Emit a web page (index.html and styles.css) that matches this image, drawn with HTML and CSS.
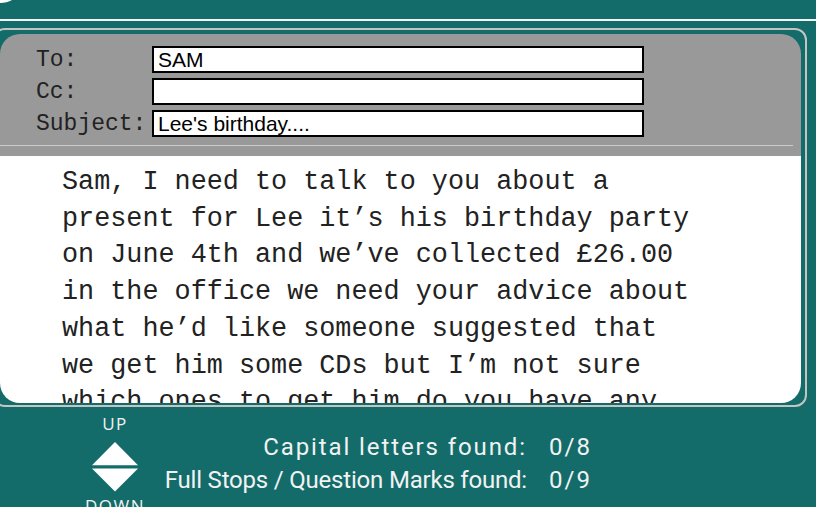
FILE: index.html
```html
<!DOCTYPE html>
<html lang="en">
  <head>
    <meta charset="utf-8" />
    <title>Punctuation Email</title>
    <link rel="stylesheet" href="styles.css">
  </head>
  <body>
    <div class="screen">
      <div class="corner-blob"></div>
      <header class="topbar"></header>

      <div class="frame">
        <div class="mail">
          <div class="mail-head">
            <div class="fields">
              <label class="field-label">To:</label>
              <div class="field-box">SAM</div>
              <label class="field-label">Cc:</label>
              <div class="field-box"></div>
              <label class="field-label">Subject:</label>
              <div class="field-box">Lee's birthday....</div>
            </div>
            <div class="divider"></div>
          </div>
          <div class="mail-body">
            <p class="message">
              Sam, I need to talk to you about a<br>
              present for Lee it’s his birthday party<br>
              on June 4th and we’ve collected £26.00<br>
              in the office we need your advice about<br>
              what he’d like someone suggested that<br>
              we get him some CDs but I’m not sure<br>
              which ones to get him do you have any<br>
              ideas
            </p>
          </div>
        </div>
      </div>

      <div class="controls">
        <div class="scroller">
          <span class="scroll-label">UP</span>
          <svg class="arrows" width="46" height="50" viewBox="0 0 46 50">
            <polygon points="23,0 46,23.3 0,23.3" fill="#fff" />
            <polygon points="0,26.6 46,26.6 23,49.6" fill="#fff" />
          </svg>
          <span class="scroll-label">DOWN</span>
        </div>
        <div class="stats">
          <div class="stat-row">
            <span class="stat-name spaced">Capital letters found:</span>
            <span class="stat-value">0/8</span>
          </div>
          <div class="stat-row">
            <span class="stat-name">Full Stops / Question Marks found:</span>
            <span class="stat-value">0/9</span>
          </div>
        </div>
      </div>
    </div>
  </body>
</html>
```

FILE: styles.css
```css
/* General Reset */
* {
  margin: 0;
  padding: 0;
  box-sizing: border-box;
}

html, body {
  height: 100%;
  background-color: #136c6a;
  overflow: hidden;
}

.screen {
  position: relative;
  width: 816px;
  height: 507px;
  overflow: hidden;
}

/* little white shape peeking in at the top left */
.corner-blob {
  position: absolute;
  left: -17px;
  top: -17px;
  width: 34px;
  height: 20px;
  border-radius: 50%;
  background: #fff;
}

.topbar {
  height: 21px;
  border-bottom: 2px solid #f4f8f8;
}

/* Outlined frame */
.frame {
  margin: 7px 0 0 -7px;
  width: 814px;
  border: 2px solid #c4c4c4;
  border-radius: 12px;
  padding: 4px 4px 2px 5px;
}

.mail-head {
  background-color: #999999;
  border-radius: 20px 20px 0 0;
  padding-top: 12px;
  height: 122px;
}

.fields {
  display: grid;
  grid-template-columns: 116px 492px;
  grid-auto-rows: 27px;
  row-gap: 5px;
  padding-left: 36px;
}

.field-label {
  font-family: "Liberation Mono", "Courier New", monospace;
  font-size: 23px;
  line-height: 29px;
  color: #222;
}

.field-box {
  background: #fff;
  border: 2px solid #000;
  padding-left: 4px;
  font-family: "Liberation Sans", Arial, sans-serif;
  font-size: 21px;
  line-height: 23px;
  color: #000;
}

.divider {
  height: 1px;
  margin: 8px 8px 0 0;
  background-color: #cccccc;
}

.mail-body {
  background: #fff;
  height: 247px;
  border-radius: 0 0 20px 20px;
  overflow: hidden;
  padding: 8px 0 0 62px;
}

.message {
  font-family: "Liberation Mono", "Courier New", monospace;
  font-size: 26.8px;
  line-height: 36.7px;
  color: #222;
  white-space: nowrap;
}

/* Bottom controls */
.controls {
  display: flex;
  align-items: flex-start;
  color: #f2f2f2;
}

.scroller {
  width: 60px;
  margin-left: 85px;
  display: flex;
  flex-direction: column;
  align-items: center;
  padding-top: 9px;
  font-family: "Open Sans", sans-serif;
}

.scroll-label {
  font-size: 17px;
  line-height: 16px;
  letter-spacing: 1.5px;
}

.arrows {
  display: block;
  margin: 10px 0 6px;
}

.stats {
  margin: 24px 0 0 0;
  font-family: Roboto, sans-serif;
  font-size: 24px;
  letter-spacing: -0.2px;
  line-height: 33px;
  white-space: nowrap;
}

.stat-row {
  display: flex;
  gap: 22px;
}

.stat-name {
  width: 382px;
  text-align: right;
}

.stat-name.spaced {
  letter-spacing: 1.9px;
}

.stat-value {
  letter-spacing: 2px;
}
```
